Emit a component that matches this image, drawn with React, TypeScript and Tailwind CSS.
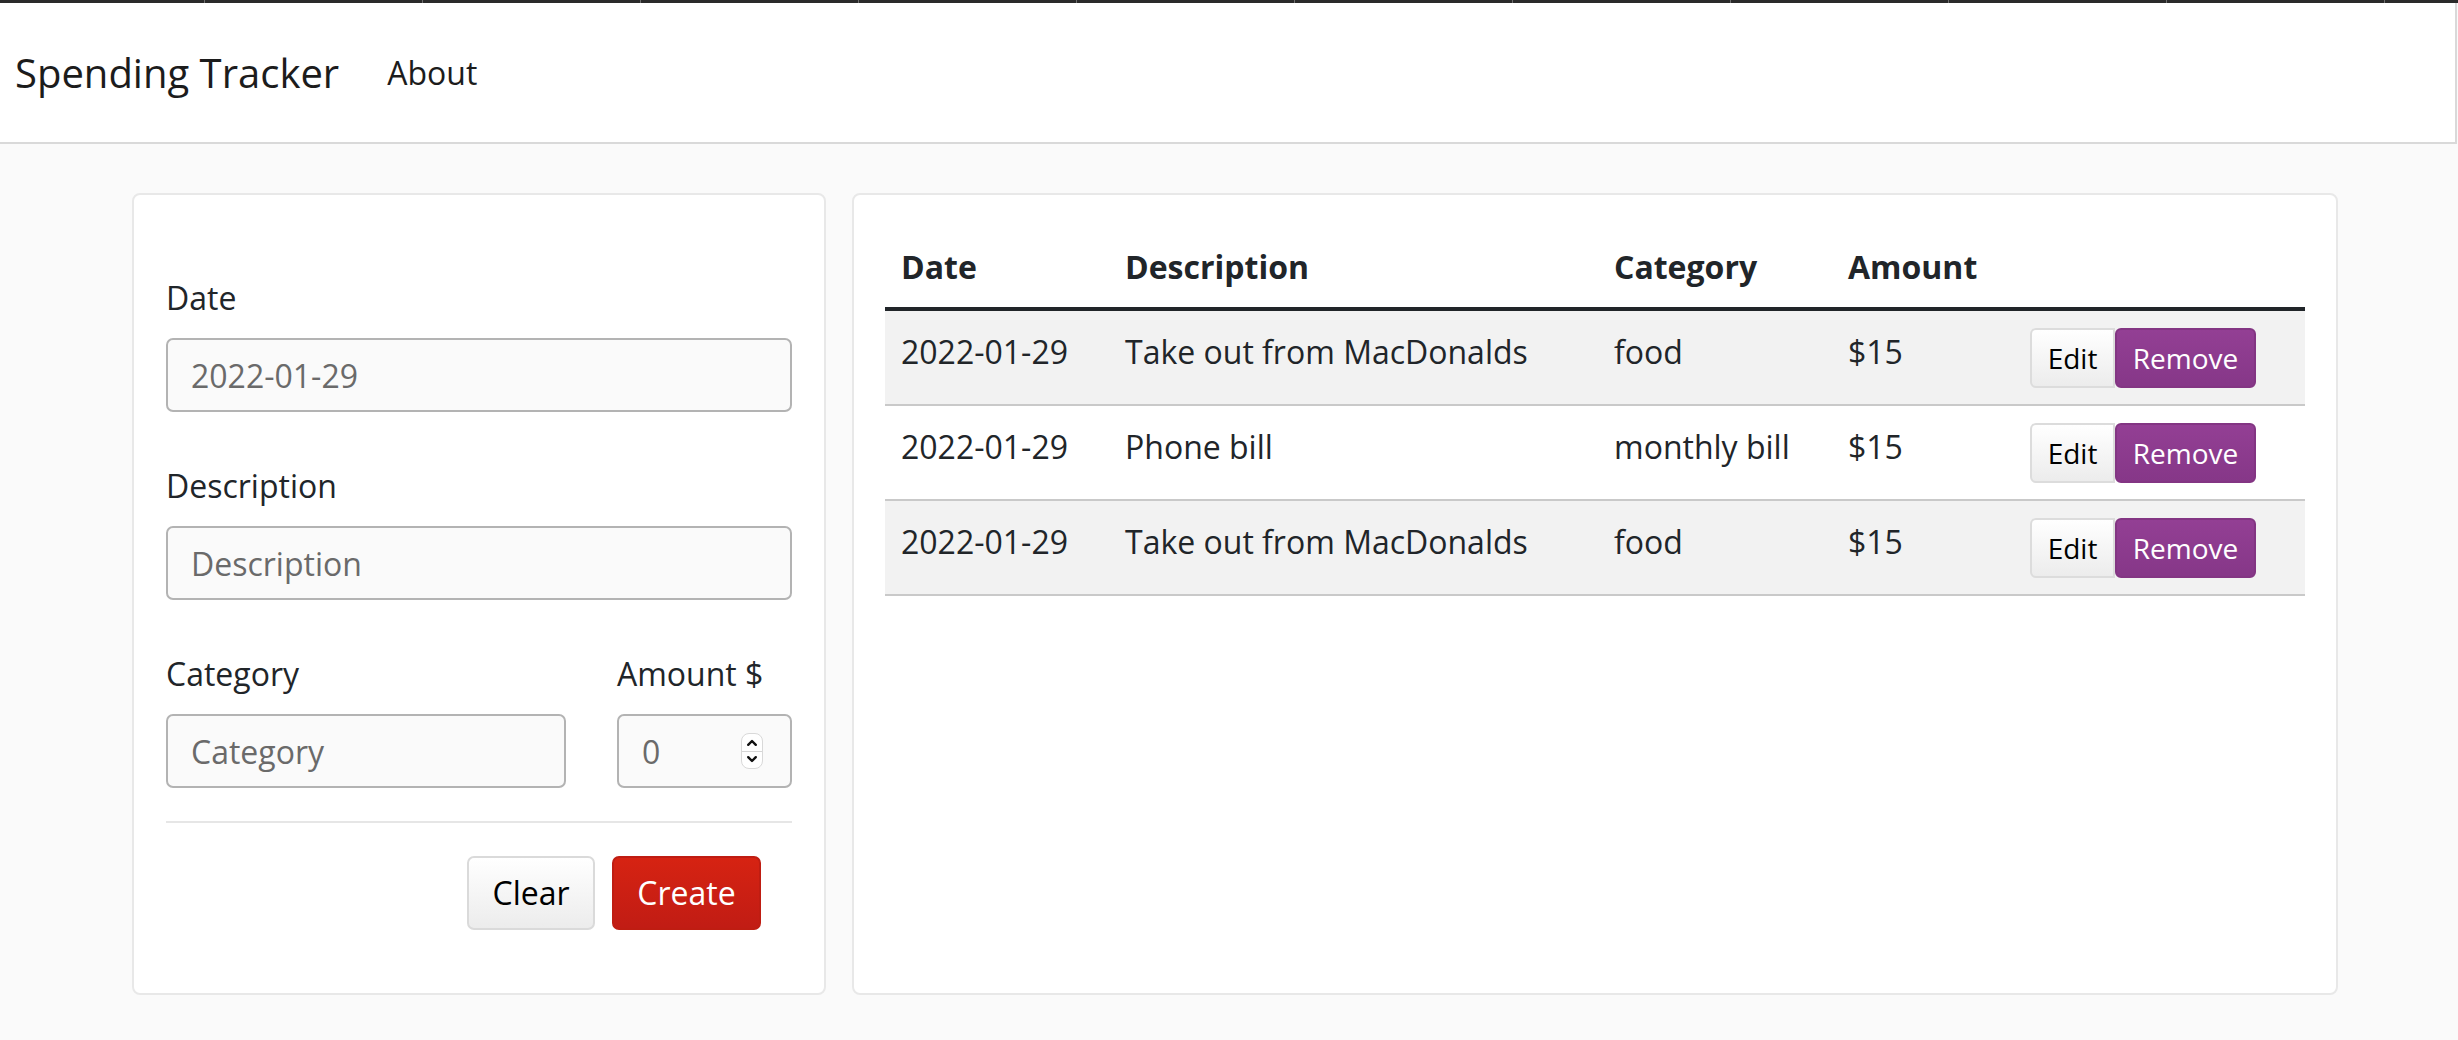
import React from 'react';

type Expense = {
  date: string;
  description: string;
  category: string;
  amount: string;
};

const expenses: Expense[] = [
  { date: '2022-01-29', description: 'Take out from MacDonalds', category: 'food', amount: '$15' },
  { date: '2022-01-29', description: 'Phone bill', category: 'monthly bill', amount: '$15' },
  { date: '2022-01-29', description: 'Take out from MacDonalds', category: 'food', amount: '$15' },
];

const inputCls =
  'block w-full h-[74px] rounded-[7px] border-2 border-[#b3b3b3] bg-[#fafafa] px-[23px] text-[32px] leading-[48px] text-[#212529] placeholder:text-[#6a6a6a] outline-none';

const labelCls = 'block mb-[16px] text-[32px] leading-[48px] text-[#212529]';

// number input arrows, drawn since headless chrome hides them until hover
function Spinner() {
  return (
    <div className="absolute right-[29px] top-[19px] flex h-[36px] w-[22px] flex-col rounded-[8px] border border-[#d9d9d9] bg-white">
      <div className="flex flex-1 items-center justify-center border-b border-[#d6d6d6]">
        <svg width="12" height="9" viewBox="0 0 12 9">
          <path d="M2.2 6.8 6 3l3.8 3.8" fill="none" stroke="#111" strokeWidth="2.4" strokeLinecap="round" strokeLinejoin="round" />
        </svg>
      </div>
      <div className="flex flex-1 items-center justify-center">
        <svg width="12" height="9" viewBox="0 0 12 9">
          <path d="M2.2 2.2 6 6l3.8-3.8" fill="none" stroke="#111" strokeWidth="2.4" strokeLinecap="round" strokeLinejoin="round" />
        </svg>
      </div>
    </div>
  );
}

function ExpenseForm() {
  return (
    <div className="w-[694px] rounded-[8px] border-2 border-[#e8e8e8] bg-white px-[32px] pt-[79px] pb-[63px]">
      <label className={labelCls}>Date</label>
      <input className={inputCls} placeholder="2022-01-29" readOnly />

      <label className={labelCls + ' mt-[50px]'}>Description</label>
      <input className={inputCls} placeholder="Description" readOnly />

      <div className="mt-[50px] flex gap-[51px]">
        <div className="flex-1">
          <label className={labelCls}>Category</label>
          <input className={inputCls} placeholder="Category" readOnly />
        </div>
        <div className="w-[175px]">
          <label className={labelCls}>Amount $</label>
          <div className="relative">
            <input className={inputCls} placeholder="0" readOnly />
            <Spinner />
          </div>
        </div>
      </div>

      <div className="mt-[33px] h-[2px] bg-[#e6e6e6]" />

      <div className="mt-[33px] flex justify-end gap-[17px] pr-[31px]">
        <button className="h-[74px] w-[128px] rounded-[7px] border-2 border-[#dadada] bg-gradient-to-b from-white to-[#ececec] text-[32px] leading-[48px] text-black">
          Clear
        </button>
        <button className="h-[74px] w-[149px] rounded-[7px] border-2 border-[#bf1d12] bg-gradient-to-b from-[#d62312] to-[#c11c14] text-[32px] leading-[48px] text-white">
          Create
        </button>
      </div>
    </div>
  );
}

function ExpenseTable() {
  return (
    <div className="w-[1486px] rounded-[8px] border-2 border-[#e8e8e8] bg-white px-[31px] pt-[32px]">
      <table className="w-[1420px] border-collapse text-[32px] leading-[48px] text-[#212529]">
        <thead>
          <tr className="border-b-4 border-[#212529] text-left">
            <th className="w-[224px] p-[16px] font-bold">Date</th>
            <th className="w-[489px] p-[16px] font-bold">Description</th>
            <th className="w-[234px] p-[16px] font-bold">Category</th>
            <th className="w-[182px] p-[16px] font-bold">Amount</th>
            <th className="w-[291px] p-[16px]" />
          </tr>
        </thead>
        <tbody>
          {expenses.map((e, i) => (
            <tr key={i} className={'border-b-2 border-[#c9c9c9] ' + (i % 2 === 0 ? 'bg-[#f2f2f2]' : 'bg-white')}>
              <td className="px-[16px] pt-[17px] align-top">{e.date}</td>
              <td className="px-[16px] pt-[17px] align-top">{e.description}</td>
              <td className="px-[16px] pt-[17px] align-top">{e.category}</td>
              <td className="px-[16px] pt-[17px] align-top">{e.amount}</td>
              <td className="px-[16px] pt-[17px] pb-[16px] align-top">
                <div className="flex">
                  <button className="h-[60px] w-[85px] rounded-l-[6px] border-2 border-[#dcdcdc] bg-gradient-to-b from-white to-[#ececec] text-[28px] leading-[42px] text-black">
                    Edit
                  </button>
                  <button className="h-[60px] w-[141px] rounded-[6px] border-2 border-[#833583] bg-gradient-to-b from-[#933f94] to-[#863788] text-[28px] leading-[42px] text-white">
                    Remove
                  </button>
                </div>
              </td>
            </tr>
          ))}
        </tbody>
      </table>
    </div>
  );
}

export default function App() {
  return (
    <div className="min-h-[1040px] w-[2458px] overflow-hidden bg-[#fafafa] font-['Open_Sans',sans-serif]">
      <div className="flex h-[3px] overflow-hidden bg-[#2a2a2a] pl-[204px]">
        {Array.from({ length: 11 }).map((_, i) => (
          <div key={i} className="h-full w-[218px] shrink-0 border-l border-[#6e6e6e]" />
        ))}
      </div>
      <nav className="mr-[1px] flex h-[141px] items-center border-r-2 border-b-2 border-[#d9d9d9] bg-white pl-[15px]">
        <span className="text-[40px] leading-[60px] text-[#1c1c1c]">Spending Tracker</span>
        <a className="ml-[48px] text-[32px] leading-[48px] text-[#1c1c1c]">About</a>
      </nav>
      <main className="flex items-stretch gap-[26px] pl-[132px] pt-[49px]">
        <ExpenseForm />
        <ExpenseTable />
      </main>
    </div>
  );
}
